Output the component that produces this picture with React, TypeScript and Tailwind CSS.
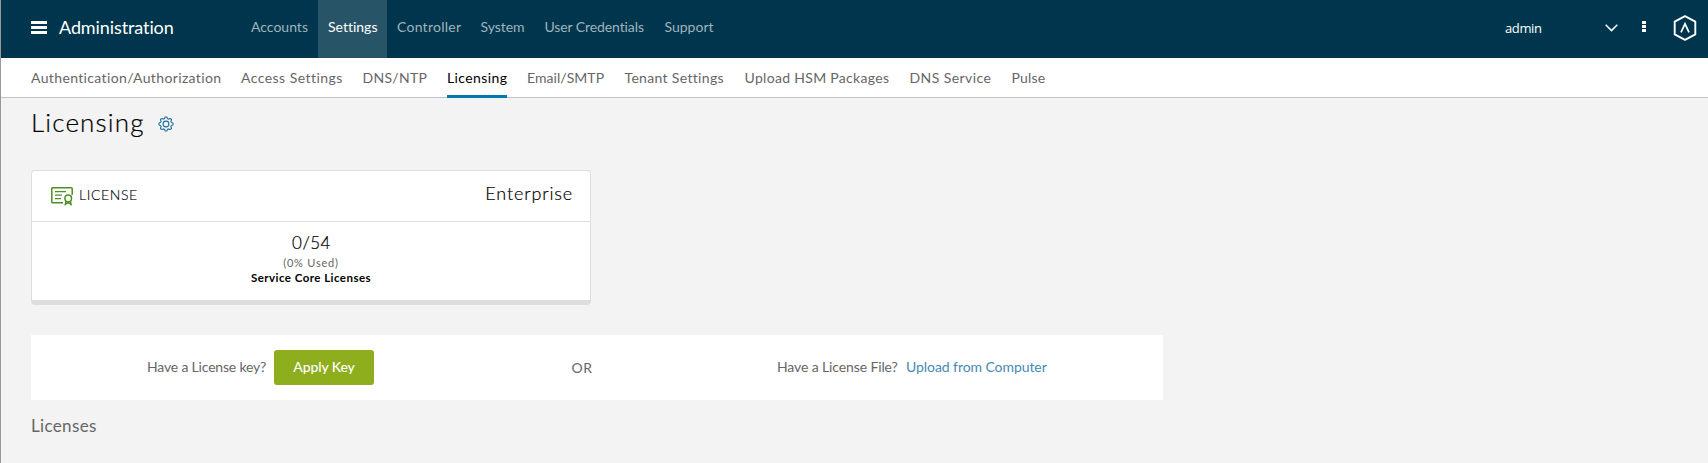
import React from "react";

const topNav = [
  { label: "Accounts", cls: "w-[77px]" },
  { label: "Settings", cls: "w-[69px]", active: true },
  { label: "Controller", cls: "w-[83.5px] tracking-[0.25px]" },
  { label: "System", cls: "w-[64px] tracking-[-0.05px]" },
  { label: "User Credentials", cls: "w-[120px] tracking-[-0.1px]" },
  { label: "Support", cls: "w-[69px]" },
];

const subNav = [
  { label: "Authentication/Authorization", cls: "w-[190px] tracking-[0.36px]" },
  { label: "Access Settings", cls: "w-[101.5px] tracking-[0.45px]" },
  { label: "DNS/NTP", cls: "w-[64.5px] tracking-[0.3px]" },
  { label: "Licensing", cls: "w-[60px] tracking-[0.4px]", active: true },
  { label: "Email/SMTP", cls: "w-[77.5px] tracking-[0.05px]" },
  { label: "Tenant Settings", cls: "w-[100px] tracking-[0.33px]" },
  { label: "Upload HSM Packages", cls: "w-[145px] tracking-[0.31px]" },
  { label: "DNS Service", cls: "w-[82px] tracking-[0.42px]" },
  { label: "Pulse", cls: "w-[34px] tracking-[0.2px]" },
];

function MenuIcon() {
  return (
    <svg width="16" height="13" viewBox="0 0 16 13" fill="#fff">
      <rect width="16" height="3" />
      <rect y="5" width="16" height="3" />
      <rect y="10" width="16" height="3" />
    </svg>
  );
}

const gearPath = (() => {
  const teeth = 8;
  const points: string[] = [];
  for (let i = 0; i <= 96; i++) {
    const a = (i / 96) * Math.PI * 2;
    const wave = Math.max(-1, Math.min(1, 1.7 * Math.cos(teeth * a)));
    const r = 6.3 + 0.75 * wave;
    points.push(`${(8 + r * Math.sin(a)).toFixed(2)} ${(8 - r * Math.cos(a)).toFixed(2)}`);
  }
  return `M${points.join("L")}Z`;
})();

function GearIcon() {
  return (
    <svg width="16" height="16" viewBox="0 0 16 16" fill="none" stroke="#1b6f9b" strokeWidth="1.1">
      <path d={gearPath} strokeLinejoin="round" />
      <circle cx="8" cy="8" r="2.9" />
    </svg>
  );
}

function CertificateIcon() {
  return (
    <svg width="22" height="19" viewBox="0 0 22 19" fill="none" stroke="#4f8f22" strokeWidth="1.5">
      <path d="M12 15.8H1.6a.8.8 0 0 1-.8-.8V1.6a.8.8 0 0 1 .8-.8h18.8a.8.8 0 0 1 .8.8V8" />
      <path d="M4 4.6h11M4 8.1h7M4 11.6h6" strokeWidth="1.2" />
      <circle cx="17.2" cy="11.4" r="3.3" />
      <path d="M15 14l-1 4.4M19.4 14l1 4.4M14.4 17.4l2.8-2 2.8 2" strokeWidth="1.3" />
    </svg>
  );
}

function LogoIcon() {
  return (
    <svg width="24" height="26" viewBox="0 0 24 26" fill="none" stroke="#fff">
      <path d="M12 1.2L22.3 6.6V19.4L12 24.8L1.7 19.4V6.6Z" strokeWidth="1.9" strokeLinejoin="round" />
      <path d="M8 17.3L12 8.8L16 17.3" strokeWidth="1.7" />
    </svg>
  );
}

export default function App() {
  return (
    <div className="h-[463px] w-[1708px] overflow-hidden border-l border-[#999] bg-[#f3f3f3] font-['Lato',sans-serif] text-sm text-[#666] [font-variant-ligatures:none]">
      <header className="flex h-[58px] bg-[#00364d] text-white">
        <div className="flex w-[240px] items-center pb-1 pl-[30px]">
          <MenuIcon />
          <h1 className="ml-[12px] text-[18px] leading-6 tracking-[-0.1px]">Administration</h1>
        </div>
        <nav className="flex">
          {topNav.map((item) => (
            <a
              key={item.label}
              className={`flex items-center whitespace-nowrap pb-[5px] pl-[10px] ${item.cls} ${
                item.active ? "bg-[#285468] text-white" : "text-[#9fb3bd]"
              }`}
            >
              {item.label}
            </a>
          ))}
        </nav>
        <div className="ml-auto flex items-center pb-[2px] pr-[10px]">
          <span className="w-[100px] font-['Open_Sans',sans-serif] text-[13px] tracking-[-0.4px]">admin</span>
          <svg className="mr-[24px]" width="13" height="8" viewBox="0 0 13 8" fill="none" stroke="#fff" strokeWidth="1.5">
            <path d="M0.7 0.8L6.5 6.6L12.3 0.8" />
          </svg>
          <svg className="mr-[27px] mb-1" width="4" height="11" viewBox="0 0 4 11" fill="#fff">
            <rect width="4" height="3" />
            <rect y="4" width="4" height="3" />
            <rect y="8" width="4" height="3" />
          </svg>
          <div className="pr-px">
            <LogoIcon />
          </div>
        </div>
      </header>

      <nav className="flex h-10 gap-5 border-b border-[#bcc7ca] bg-white pl-[30px]">
        {subNav.map((item) => (
          <a
            key={item.label}
            className={`-mb-px flex items-center whitespace-nowrap ${item.cls} ${
              item.active ? "border-b-[3px] border-[#0079ad] pt-[2px] text-black" : "pb-px"
            }`}
          >
            {item.label}
          </a>
        ))}
      </nav>

      <main className="pl-[30px]">
        <div className="flex h-[72px] items-start pt-[9px]">
          <h2 className="w-[126.5px] text-[26px] font-light leading-[30px] tracking-[1.15px] text-black [-webkit-text-stroke:0.2px]">
            Licensing
          </h2>
          <div className="pt-[9px]">
            <GearIcon />
          </div>
        </div>

        <section className="h-[135px] w-[560px] rounded-[4px] border border-b-[5px] border-[#dedede] bg-white">
          <div className="flex h-[51px] items-center justify-between border-b border-[#dedede] pl-[19px] pr-[17px]">
            <div className="flex items-center">
              <CertificateIcon />
              <span className="ml-[6px] pb-[2px] text-sm font-light leading-5 tracking-[0.6px] text-black [-webkit-text-stroke:0.15px]">
                LICENSE
              </span>
            </div>
            <span className="pb-[7px] text-[18px] font-light leading-6 tracking-[0.85px] text-black [-webkit-text-stroke:0.2px]">
              Enterprise
            </span>
          </div>
          <div className="flex flex-col items-center pt-[11px] text-black">
            <div className="pl-px text-[17px] font-light leading-5 tracking-[0.5px] [-webkit-text-stroke:0.2px]">0/54</div>
            <div className="pt-[2px] text-[11px] leading-4 tracking-[0.8px] text-[#666]">(0% Used)</div>
            <div className="text-[11.5px] font-bold leading-[14px] tracking-[0.46px]">Service Core Licenses</div>
          </div>
        </section>

        <section className="mt-[30px] flex h-[65px] w-[1132px] items-center bg-white">
          <div className="flex w-[540.5px] items-center pl-[116px]">
            <span className="w-[127px] pb-px tracking-[-0.18px]">Have a License key?</span>
            <button className="h-[35px] w-[100px] rounded-[3px] bg-[#8fae1e] pb-px font-medium tracking-[-0.1px] text-white">
              Apply Key
            </button>
          </div>
          <span className="w-[205.5px] tracking-[0.5px]">OR</span>
          <span className="w-[129px] pb-px tracking-[-0.12px]">Have a License File?</span>
          <a className="pb-px tracking-[-0.07px] text-[#4589b5]">Upload from Computer</a>
        </section>

        <h3 className="pt-[14px] text-[17px] leading-6 tracking-[0.34px]">Licenses</h3>
      </main>
    </div>
  );
}
